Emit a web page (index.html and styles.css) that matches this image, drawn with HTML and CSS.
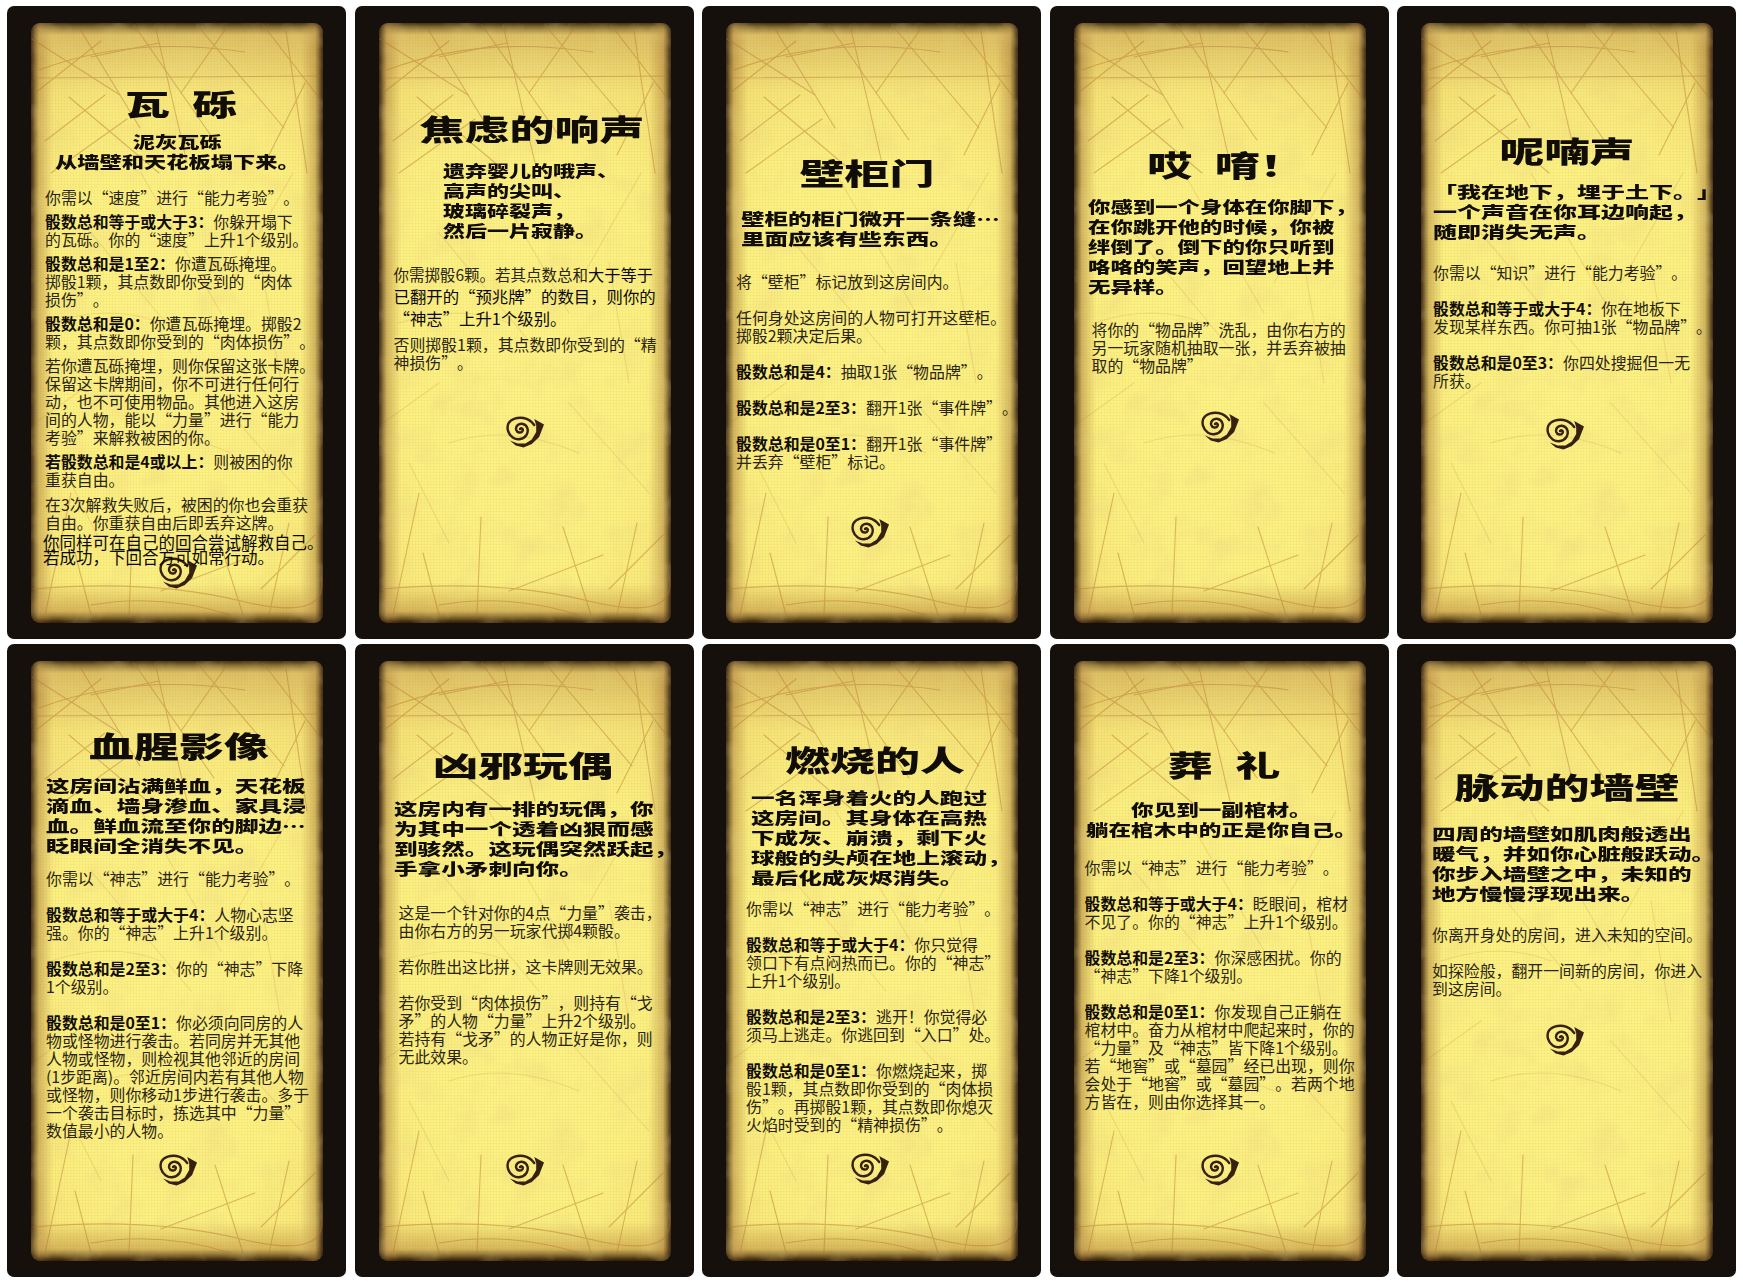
FILE: index.html
```html
<!doctype html>
<html lang="zh-CN">
    <head>
        <meta charset="utf-8">
        <title>Event cards</title>
        <link rel="stylesheet" href="styles.css">
    </head>
    <body>
        <svg class="defs" width="0" height="0">
            <defs>
                <filter id="mottle" x="0" y="0" width="100%" height="100%">
                    <feTurbulence type="fractalNoise" baseFrequency="0.03" numOctaves="4" seed="7"/>
                    <feColorMatrix values="0 0 0 0 0.8  0 0 0 0 0.62  0 0 0 0 0.2  0 0 0.7 0 -0.32"/>
                </filter>
                <symbol id="scratch" viewBox="0 0 292 600" preserveAspectRatio="none">
                    <rect width="292" height="600" filter="url(#mottle)"/>
                    <g class="lines">
                        <path d="M8 47 Q100 12 214 29"/>
                        <path d="M1 16 L89 72"/>
                        <path d="M49 6 L109 105"/>
                        <path d="M103 2 L183 117"/>
                        <path d="M166 2 L253 105"/>
                        <path d="M232 2 L286 72"/>
                        <path d="M3 55 L289 53"/>
                        <path d="M60 34 L128 20"/>
                        <path d="M4 70 L70 18"/>
                        <path d="M255 8 L276 150"/>
                        <path d="M124 2 L156 140"/>
                        <path d="M38 74 L128 150"/>
                        <path d="M14 118 L74 72"/>
                        <path d="M274 60 L238 132"/>
                        <path d="M196 4 L150 70"/>
                        <path d="M20 150 L96 96"/>
                        <path d="M44 530 L60 592"/>
                        <path d="M102 494 L98 592"/>
                        <path d="M2 566 Q120 556 210 578 T290 552"/>
                        <path d="M130 568 L224 532"/>
                        <path d="M40 470 L14 592"/>
                        <path d="M230 566 L284 512"/>
                        <path d="M60 582 Q130 570 200 592"/>
                        <path d="M184 504 L212 592"/>
                        <path d="M258 500 L238 592"/>
                    </g>
                    <g class="lines faint">
                        <path d="M60 210 L160 330"/>
                        <path d="M230 240 L250 360"/>
                        <path d="M20 300 Q80 280 130 300"/>
                        <path d="M70 420 Q130 400 200 430"/>
                        <path d="M190 380 L270 470"/>
                        <path d="M30 440 L70 520"/>
                        <path d="M110 150 L190 290"/>
                        <path d="M262 150 L200 260"/>
                        <path d="M4 400 L60 360"/>
                    </g>
                </symbol>
                <symbol id="spiral" viewBox="0 0 40 32" preserveAspectRatio="none">
                    <path class="spiral-line" d="M15.5 13 C17 11.5 19 13 18 15 C16.8 17.5 12.5 17 11.5 13.8 C10.5 10 14.5 7 18.5 8 C23.5 9.3 24.5 15 22 19 C19 23.5 12.5 24.5 8 21.5 C3 18 1.5 12 3.5 7.5 C6 3 13 1 19 2 C23 2.7 27 5 30 9"/>
                    <path class="spiral-fill" d="M30 3 L40 8.5 L35 21 L27.5 28 L19 31.5 L11 29.5 L5 24.5 L13 27.5 L21 27.5 L27.5 23.5 L32 16 L32 9 Z"/>
                </symbol>
            </defs>
        </svg>

        <main class="sheet">
            <article class="card c1">
                <div class="parchment">
                    <svg class="scratches"><use href="#scratch"/></svg>
                    <h2 class="title">瓦&ensp;砾</h2>
                    <p class="flavor">泥灰瓦砾<br>从墙壁和天花板塌下来。</p>
                    <div class="rules">
                        <p>你需以“速度”进行“能力考验”。</p>
                        <p><b>骰数总和等于或大于3：</b>你躲开塌下<br>的瓦砾。你的“速度”上升1个级别。</p>
                        <p><b>骰数总和是1至2：</b>你遭瓦砾掩埋。<br>掷骰1颗，其点数即你受到的“肉体<br>损伤”。</p>
                        <p><b>骰数总和是0：</b>你遭瓦砾掩埋。掷骰2<br>颗，其点数即你受到的“肉体损伤”。</p>
                        <p>若你遭瓦砾掩埋，则你保留这张卡牌。<br>保留这卡牌期间，你不可进行任何行<br>动，也不可使用物品。其他进入这房<br>间的人物，能以“力量”进行“能力<br>考验”来解救被困的你。</p>
                        <p><b>若骰数总和是4或以上：</b>则被困的你<br>重获自由。</p>
                        <p>在3次解救失败后，被困的你也会重获<br>自由。你重获自由后即丢弃这牌。</p>
                        <p class="squeezed">你同样可在自己的回合尝试解救自己。<br>若成功，下回合方可如常行动。</p>
                    </div>
                    <svg class="mark"><use href="#spiral"/></svg>
                </div>
            </article>

            <article class="card c2">
                <div class="parchment">
                    <svg class="scratches"><use href="#scratch"/></svg>
                    <h2 class="title">焦虑的响声</h2>
                    <p class="flavor">遗弃婴儿的哦声、<br>高声的尖叫、<br>玻璃碎裂声，<br>然后一片寂静。</p>
                    <div class="rules">
                        <p class="patched">你需掷骰6颗。若其点数总和<span class="patch-word">大于等于</span><br><span class="patch-line">已翻开的“预兆牌”的数目，则你的</span><br><span class="patch-line">“神志”上升1个级别。</span></p>
                        <p>否则掷骰1颗，其点数即你受到的“精<br>神损伤”。</p>
                    </div>
                    <svg class="mark"><use href="#spiral"/></svg>
                </div>
            </article>

            <article class="card c3">
                <div class="parchment">
                    <svg class="scratches"><use href="#scratch"/></svg>
                    <h2 class="title">壁柜门</h2>
                    <p class="flavor">壁柜的柜门微开一条缝…<br>里面应该有些东西。</p>
                    <div class="rules">
                        <p>将“壁柜”标记放到这房间内。</p>
                        <p>任何身处这房间的人物可打开这壁柜。<br>掷骰2颗决定后果。</p>
                        <p><b>骰数总和是4：</b>抽取1张“物品牌”。</p>
                        <p><b>骰数总和是2至3：</b>翻开1张“事件牌”。</p>
                        <p><b>骰数总和是0至1：</b>翻开1张“事件牌”<br>并丢弃“壁柜”标记。</p>
                    </div>
                    <svg class="mark"><use href="#spiral"/></svg>
                </div>
            </article>

            <article class="card c4">
                <div class="parchment">
                    <svg class="scratches"><use href="#scratch"/></svg>
                    <h2 class="title">哎&ensp;唷！</h2>
                    <p class="flavor">你感到一个身体在你脚下，<br>在你跳开他的时候，你被<br>绊倒了。倒下的你只听到<br>咯咯的笑声，回望地上并<br>无异样。</p>
                    <div class="rules">
                        <p>将你的“物品牌”洗乱，由你右方的<br>另一玩家随机抽取一张，并丢弃被抽<br>取的“物品牌”</p>
                    </div>
                    <svg class="mark"><use href="#spiral"/></svg>
                </div>
            </article>

            <article class="card c5">
                <div class="parchment">
                    <svg class="scratches"><use href="#scratch"/></svg>
                    <h2 class="title">呢喃声</h2>
                    <p class="flavor">「我在地下，埋于土下。」<br>一个声音在你耳边响起，<br>随即消失无声。</p>
                    <div class="rules">
                        <p>你需以“知识”进行“能力考验”。</p>
                        <p><b>骰数总和等于或大于4：</b>你在地板下<br>发现某样东西。你可抽1张“物品牌”。</p>
                        <p><b>骰数总和是0至3：</b>你四处搜掘但一无<br>所获。</p>
                    </div>
                    <svg class="mark"><use href="#spiral"/></svg>
                </div>
            </article>

            <article class="card c6">
                <div class="parchment">
                    <svg class="scratches"><use href="#scratch"/></svg>
                    <h2 class="title">血腥影像</h2>
                    <p class="flavor">这房间沾满鲜血，天花板<br>滴血、墙身渗血、家具浸<br>血。鲜血流至你的脚边…<br>眨眼间全消失不见。</p>
                    <div class="rules">
                        <p>你需以“神志”进行“能力考验”。</p>
                        <p><b>骰数总和等于或大于4：</b>人物心志坚<br>强。你的“神志”上升1个级别。</p>
                        <p><b>骰数总和是2至3：</b>你的“神志”下降<br>1个级别。</p>
                        <p><b>骰数总和是0至1：</b>你必须向同房的人<br>物或怪物进行袭击。若同房并无其他<br>人物或怪物，则检视其他邻近的房间<br>(1步距离)。邻近房间内若有其他人物<br>或怪物，则你移动1步进行袭击。多于<br>一个袭击目标时，拣选其中“力量”<br>数值最小的人物。</p>
                    </div>
                    <svg class="mark"><use href="#spiral"/></svg>
                </div>
            </article>

            <article class="card c7">
                <div class="parchment">
                    <svg class="scratches"><use href="#scratch"/></svg>
                    <h2 class="title">凶邪玩偶</h2>
                    <p class="flavor">这房内有一排的玩偶，你<br>为其中一个透着凶狠而感<br>到骇然。这玩偶突然跃起，<br>手拿小矛刺向你。</p>
                    <div class="rules">
                        <p>这是一个针对你的4点“力量”袭击，<br>由你右方的另一玩家代掷4颗骰。</p>
                        <p>若你胜出这比拼，这卡牌则无效果。</p>
                        <p>若你受到“肉体损伤”，则持有“戈<br>矛”的人物“力量”上升2个级别。<br>若持有“戈矛”的人物正好是你，则<br>无此效果。</p>
                    </div>
                    <svg class="mark"><use href="#spiral"/></svg>
                </div>
            </article>

            <article class="card c8">
                <div class="parchment">
                    <svg class="scratches"><use href="#scratch"/></svg>
                    <h2 class="title">燃烧的人</h2>
                    <p class="flavor">一名浑身着火的人跑过<br>这房间。其身体在高热<br>下成灰、崩溃，剩下火<br>球般的头颅在地上滚动，<br>最后化成灰烬消失。</p>
                    <div class="rules">
                        <p>你需以“神志”进行“能力考验”。</p>
                        <p><b>骰数总和等于或大于4：</b>你只觉得<br>领口下有点闷热而已。你的“神志”<br>上升1个级别。</p>
                        <p><b>骰数总和是2至3：</b>逃开！你觉得必<br>须马上逃走。你逃回到“入口”处。</p>
                        <p><b>骰数总和是0至1：</b>你燃烧起来，掷<br>骰1颗，其点数即你受到的“肉体损<br>伤”。再掷骰1颗，其点数即你熄灭<br>火焰时受到的“精神损伤”。</p>
                    </div>
                    <svg class="mark"><use href="#spiral"/></svg>
                </div>
            </article>

            <article class="card c9">
                <div class="parchment">
                    <svg class="scratches"><use href="#scratch"/></svg>
                    <h2 class="title">葬&ensp;礼</h2>
                    <p class="flavor">你见到一副棺材。<br>躺在棺木中的正是你自己。</p>
                    <div class="rules">
                        <p>你需以“神志”进行“能力考验”。</p>
                        <p><b>骰数总和等于或大于4：</b>眨眼间，棺材<br>不见了。你的“神志”上升1个级别。</p>
                        <p><b>骰数总和是2至3：</b>你深感困扰。你的<br>“神志”下降1个级别。</p>
                        <p><b>骰数总和是0至1：</b>你发现自己正躺在<br>棺材中。奋力从棺材中爬起来时，你的<br>“力量”及“神志”皆下降1个级别。<br>若“地窖”或“墓园”经已出现，则你<br>会处于“地窖”或“墓园”。若两个地<br>方皆在，则由你选择其一。</p>
                    </div>
                    <svg class="mark"><use href="#spiral"/></svg>
                </div>
            </article>

            <article class="card c10">
                <div class="parchment">
                    <svg class="scratches"><use href="#scratch"/></svg>
                    <h2 class="title">脉动的墙壁</h2>
                    <p class="flavor">四周的墙壁如肌肉般透出<br>暖气，并如你心脏般跃动。<br>你步入墙壁之中，未知的<br>地方慢慢浮现出来。</p>
                    <div class="rules">
                        <p>你离开身处的房间，进入未知的空间。</p>
                        <p>如探险般，翻开一间新的房间，你进入<br>到这房间。</p>
                    </div>
                    <svg class="mark"><use href="#spiral"/></svg>
                </div>
            </article>
        </main>
    </body>
</html>
```

FILE: styles.css
```css
* {
    box-sizing: border-box;
}

html,
body {
    margin: 0;
    background-color: #fff;
}

body {
    font-family: "Noto Sans CJK SC", "Liberation Sans", sans-serif;
    color: #2b2510;
    text-spacing-trim: space-all;
}

.defs {
    display: block;
    height: 0;
}

.sheet {
    display: grid;
    grid-template-columns: repeat(5, 339px);
    grid-template-rows: repeat(2, 633px);
    gap: 5px 8.5px;
    padding: 6px 0 0 7px;
}

.card {
    padding: 17px 23px 16px 24px;
    background-color: #15100c;
    border-radius: 7px;
    --top: 60px;
    --title-shift: 0px;
    --flavor-gap: 12px;
    --flavor-left: 14px;
    --flavor-x: 1.475;
    --rules-gap: 22px;
    --rules-left: 14px;
    --para-gap: 18px;
    --mark-gap: 33px;
}

.parchment {
    position: relative;
    display: flex;
    flex-direction: column;
    height: 100%;
    padding-top: var(--top);
    border-radius: 9px;
    background-color: #fdf286;
    background-image:
        repeating-linear-gradient(0deg, rgba(130, 100, 30, .04) 0 1px, transparent 1px 3px),
        repeating-linear-gradient(90deg, rgba(130, 100, 30, .04) 0 1px, transparent 1px 3px),
        linear-gradient(to right, rgba(70, 50, 25, .9), rgba(170, 125, 60, .5) 8px, transparent 22px, transparent calc(100% - 22px), rgba(170, 125, 60, .5) calc(100% - 8px), rgba(70, 50, 25, .9)),
        linear-gradient(to bottom, rgba(70, 50, 20, .85), rgba(180, 130, 65, .42) 12px, rgba(225, 185, 95, .16) 70px, transparent 150px, transparent calc(100% - 40px), rgba(170, 115, 45, .45) calc(100% - 12px), rgba(50, 28, 8, .95)),
        radial-gradient(ellipse at 50% 52%, #fdf286 0%, #fcf081 60%, #f6e274 100%);
    box-shadow: inset 0 0 5px 1px rgba(40, 20, 5, .7);
}

.scratches {
    position: absolute;
    top: 0;
    left: 0;
    width: 100%;
    height: 100%;
    border-radius: 9px;
}

.lines {
    fill: none;
    stroke: #b5762e;
    stroke-width: 1.1;
    stroke-linecap: round;
    opacity: .45;
}

.lines.faint {
    opacity: .18;
}

.title {
    position: relative;
    margin: 0 0 0 calc(var(--title-shift) * 2);
    font-size: 29px;
    line-height: 40px;
    font-weight: 900;
    text-align: center;
    color: #100c06;
    transform: scaleX(1.55);
}

.flavor {
    position: relative;
    width: max-content;
    margin: var(--flavor-gap) 0 0 var(--flavor-left);
    font-size: 16px;
    line-height: 20px;
    font-weight: 900;
    color: #100c06;
    transform: scaleX(var(--flavor-x));
    transform-origin: 0 0;
}

.rules {
    position: relative;
    z-index: 1;
    margin: calc(var(--rules-gap) + 1px) 0 0 var(--rules-left);
    font-size: 15.9px;
    line-height: 18px;
    white-space: nowrap;
}

.rules p {
    margin: 0 0 var(--para-gap);
}

.rules p:last-child {
    margin-bottom: 0;
}

.rules b {
    font-weight: 700;
    color: #120e06;
}

.mark {
    position: relative;
    display: block;
    flex: none;
    width: 39px;
    height: 32px;
    margin: calc(var(--mark-gap) - 1px) auto 0;
}

.spiral-line {
    fill: none;
    stroke: #36210f;
    stroke-width: 2.5;
    stroke-linecap: round;
}

.spiral-fill {
    fill: #36210f;
}

/* every card has its own text block, so only the offsets differ */
.c1 {
    --top: 60px;
    --title-shift: 4px;
    --flavor-gap: 8px;
    --flavor-left: 24px;
    --flavor-x: 1.39;
    --rules-gap: 17px;
    --para-gap: 6.1px;
    --mark-gap: -8px;
}

.c1 .flavor {
    text-align: center;
}

.squeezed {
    margin: -3px 0 0 -2px !important;
    font-size: 16.5px;
    line-height: 15.5px;
    color: #0c0a04;
}

.c2 {
    --top: 85px;
    --title-shift: 7px;
    --flavor-left: 64px;
    --flavor-x: 1.375;
    --rules-gap: 22px;
    --rules-left: 15px;
    --para-gap: 7px;
    --mark-gap: 45px;
}

.patched {
    font-size: 15.5px;
    line-height: 22px;
}

.patch-word {
    font-size: 16.2px;
    color: #0c0a04;
}

.patch-line {
    font-size: 16.4px;
    color: #0c0a04;
}

.c3 {
    --top: 129px;
    --title-shift: -5px;
    --flavor-gap: 16px;
    --flavor-left: 15px;
    --flavor-x: 1.47;
    --rules-gap: 24px;
    --rules-left: 10px;
    --mark-gap: 46px;
}

.c3 .mark {
    left: -3px;
}

.c4 {
    --top: 121px;
    --title-shift: 6px;
    --flavor-gap: 12px;
    --flavor-left: 14px;
    --flavor-x: 1.4;
    --rules-gap: 24px;
    --rules-left: 18px;
    --mark-gap: 37px;
}

.c5 {
    --top: 107px;
    --flavor-gap: 11px;
    --flavor-left: 12px;
    --flavor-x: 1.5;
    --rules-gap: 22px;
    --rules-left: 12px;
    --mark-gap: 29px;
}

.c5 .mark,
.c10 .mark {
    left: -3px;
}

.c6 {
    --top: 64px;
    --title-shift: 2px;
    --flavor-gap: 10px;
    --flavor-left: 15px;
    --rules-gap: 14px;
    --rules-left: 15px;
    --mark-gap: 15px;
}

.c7 {
    --top: 83px;
    --title-shift: -2px;
    --flavor-gap: 14px;
    --flavor-left: 15px;
    --rules-gap: 25px;
    --rules-left: 20px;
    --mark-gap: 89px;
}

.c8 {
    --top: 78px;
    --title-shift: 3px;
    --flavor-gap: 8px;
    --flavor-left: 25px;
    --rules-gap: 12px;
    --rules-left: 20px;
    --mark-gap: 20px;
}

.c8 .mark {
    left: -3px;
}

.c9 {
    --top: 83px;
    --title-shift: 4px;
    --flavor-gap: 15px;
    --flavor-left: 12px;
    --flavor-x: 1.41;
    --rules-gap: 19px;
    --rules-left: 11px;
    --mark-gap: 44px;
}

.c9 .flavor {
    text-align: center;
}

.c10 {
    --top: 105px;
    --flavor-gap: 17px;
    --flavor-left: 11px;
    --rules-gap: 22px;
    --rules-left: 11px;
    --mark-gap: 27px;
}
```
